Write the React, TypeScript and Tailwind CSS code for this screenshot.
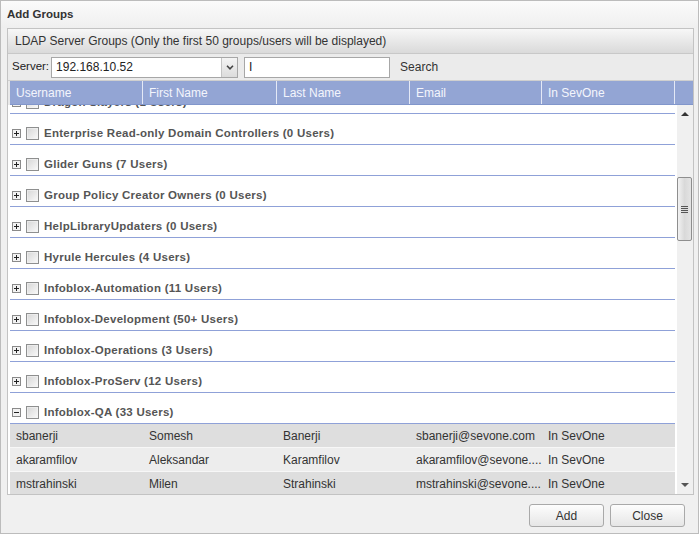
import { useMemo } from 'react';

type Group = {
  name: string;
  count: string;
  expanded?: boolean;
};

type User = {
  username: string;
  firstName: string;
  lastName: string;
  email: string;
  status: string;
};

const groups: Group[] = [
  { name: 'Dragon Slayers', count: '1' },
  { name: 'Enterprise Read-only Domain Controllers', count: '0' },
  { name: 'Glider Guns', count: '7' },
  { name: 'Group Policy Creator Owners', count: '0' },
  { name: 'HelpLibraryUpdaters', count: '0' },
  { name: 'Hyrule Hercules', count: '4' },
  { name: 'Infoblox-Automation', count: '11' },
  { name: 'Infoblox-Development', count: '50+' },
  { name: 'Infoblox-Operations', count: '3' },
  { name: 'Infoblox-ProServ', count: '12' },
  { name: 'Infoblox-QA', count: '33', expanded: true },
];

const users: User[] = [
  { username: 'sbanerji', firstName: 'Somesh', lastName: 'Banerji', email: 'sbanerji@sevone.com', status: 'In SevOne' },
  { username: 'akaramfilov', firstName: 'Aleksandar', lastName: 'Karamfilov', email: 'akaramfilov@sevone....', status: 'In SevOne' },
  { username: 'mstrahinski', firstName: 'Milen', lastName: 'Strahinski', email: 'mstrahinski@sevone....', status: 'In SevOne' },
];

const columns = [
  { label: 'Username', width: 'w-[133px]' },
  { label: 'First Name', width: 'w-[134px]' },
  { label: 'Last Name', width: 'w-[133px]' },
  { label: 'Email', width: 'w-[132px]' },
  { label: 'In SevOne', width: 'w-[133px]' },
];

const Expander = ({ open }: { open?: boolean }) => (
  <svg width="9" height="9" viewBox="0 0 9 9" className="shrink-0">
    <rect x="0.5" y="0.5" width="8" height="8" fill="#f2f2f2" stroke="#8a8a8a" />
    <path d="M2 4.5H7" stroke="#222" strokeWidth="1" />
    {!open && <path d="M4.5 2V7" stroke="#222" strokeWidth="1" />}
  </svg>
);

const Checkbox = () => (
  <span className="block w-[13px] h-[13px] shrink-0 border border-[#8e8f8f] bg-gradient-to-br from-[#d6d6d6] to-[#fafafa]">
    <span className="block w-full h-full border border-[#f4f4f4]/60" />
  </span>
);

const GroupRow = ({ group }: { group: Group }) => (
  <div className="h-[31px] border-b border-[#8fa1d8] flex items-center pt-[9px] pl-[2px]">
    <Expander open={group.expanded} />
    <span className="ml-[5px]">
      <Checkbox />
    </span>
    <span className="ml-[5px] font-bold text-[11.5px] leading-[13px] tracking-[0.25px] text-[#555] whitespace-nowrap">
      {group.name} ({group.count} Users)
    </span>
  </div>
);

const UserRow = ({ user, index }: { user: User; index: number }) => {
  const cells = [user.username, user.firstName, user.lastName, user.email, user.status];
  return (
    <div
      className={`h-[24px] border-b border-[#f7f7f7] flex items-center text-[12px] text-[#333] ${
        index % 2 === 0 ? 'bg-[#dedede]' : 'bg-[#ededed]'
      }`}
    >
      {cells.map((cell, i) => (
        <div key={i} className={`${columns[i].width} shrink-0 pl-[6px] overflow-hidden whitespace-nowrap`}>
          {cell}
        </div>
      ))}
    </div>
  );
};

const Scrollbar = () => {
  const thumbTop = useMemo(() => 55, []);
  return (
    <div className="w-[16px] shrink-0 bg-[#f0f0f0] flex flex-col items-center">
      <div className="h-[17px] w-full flex items-center justify-center pt-[1px]">
        <span className="block w-0 h-0 border-x-[4px] border-x-transparent border-b-[4px] border-b-[#333]" />
      </div>
      <div className="flex-1 w-full">
        <div
          className="w-[15px] h-[64px] rounded-[2px] border border-[#8e8e8e] bg-gradient-to-r from-[#f2f2f2] via-[#d9d9d9] to-[#e4e4e4] flex flex-col items-center justify-center gap-[1px]"
          style={{ marginTop: thumbTop }}
        >
          <span className="block w-[7px] h-[1px] bg-[#555]" />
          <span className="block w-[7px] h-[1px] bg-[#555]" />
          <span className="block w-[7px] h-[1px] bg-[#555]" />
          <span className="block w-[7px] h-[1px] bg-[#555]" />
        </div>
      </div>
      <div className="h-[17px] w-full flex items-center justify-center pb-[2px]">
        <span className="block w-0 h-0 border-x-[4px] border-x-transparent border-t-[4px] border-t-[#555]" />
      </div>
    </div>
  );
};

const FooterButton = ({ label }: { label: string }) => (
  <button className="w-[75px] h-[23px] rounded-[3px] border border-[#a9a9a9] bg-gradient-to-b from-[#fdfdfd] to-[#e6e6e6] text-[12px] text-[#333]">
    {label}
  </button>
);

const App = () => {
  return (
    <div className="w-[699px] h-[534px] bg-[#f0f0f0] border border-[#bcbcbc] flex flex-col font-['Liberation_Sans',Arial,sans-serif]">
      <div className="h-[27px] shrink-0 px-[6px] flex items-center bg-gradient-to-b from-[#fbfbfb] to-[#efefef] font-bold text-[11.5px] text-[#333]">
        Add Groups
      </div>

      <div className="ml-[6px] mr-[4px] h-[467px] shrink-0 border border-[#c3c3c3] flex flex-col bg-[#e9e9e9]">
        <div className="h-[25px] shrink-0 border-b border-[#c8c8c8] bg-gradient-to-b from-[#f7f7f7] to-[#dadada] px-[7px] flex items-center text-[12px] text-[#333]">
          LDAP Server Groups (Only the first 50 groups/users will be displayed)
        </div>

        <div className="h-[27px] shrink-0 border-b border-[#cfcfcf] bg-[#ebebeb] flex items-center pl-[4px] text-[12px] text-[#222]">
          <span className="text-[11.5px]">Server:</span>
          <div className="ml-[2px] w-[187px] h-[21px] border border-[#a7a7a7] bg-white flex items-center">
            <span className="flex-1 pl-[4px]">192.168.10.52</span>
            <span className="w-[16px] h-full border-l border-[#c4c4c4] bg-gradient-to-b from-[#f4f4f4] to-[#dcdcdc] flex items-center justify-center">
              <svg width="8" height="5" viewBox="0 0 8 5">
                <path d="M1 0.8L4 3.8L7 0.8" fill="none" stroke="#444" strokeWidth="1.6" />
              </svg>
            </span>
          </div>
          <div className="ml-[6px] w-[146px] h-[21px] border border-[#a7a7a7] bg-white flex items-center pl-[4px]">
            I
          </div>
          <span className="ml-[10px] text-[#333]">Search</span>
        </div>

        <div className="h-[24px] shrink-0 flex pl-[2px] bg-[#e9e9e9]">
          <div className="flex-1 flex bg-[#93a5d4] border-b border-[#8196cb] text-[12px] text-[#f3f5fc]">
            {columns.map((col) => (
              <div key={col.label} className={`${col.width} shrink-0 border-r border-[#e4e9f6] pl-[6px] flex items-center`}>
                {col.label}
              </div>
            ))}
            <div className="flex-1" />
          </div>
        </div>

        <div className="flex-1 flex bg-white overflow-hidden">
          <div className="w-[665px] ml-[2px] shrink-0 overflow-hidden">
            <div className="-mt-[22px]">
              {groups.map((group) => (
                <GroupRow key={group.name} group={group} />
              ))}
              {users.map((user, i) => (
                <UserRow key={user.username} user={user} index={i} />
              ))}
            </div>
          </div>
          <div className="w-[2px] shrink-0" />
          <Scrollbar />
        </div>
      </div>

      <div className="flex-1 flex justify-end items-start pt-[9px] pr-[13px] gap-[6px]">
        <FooterButton label="Add" />
        <FooterButton label="Close" />
      </div>
    </div>
  );
};

export default App;
